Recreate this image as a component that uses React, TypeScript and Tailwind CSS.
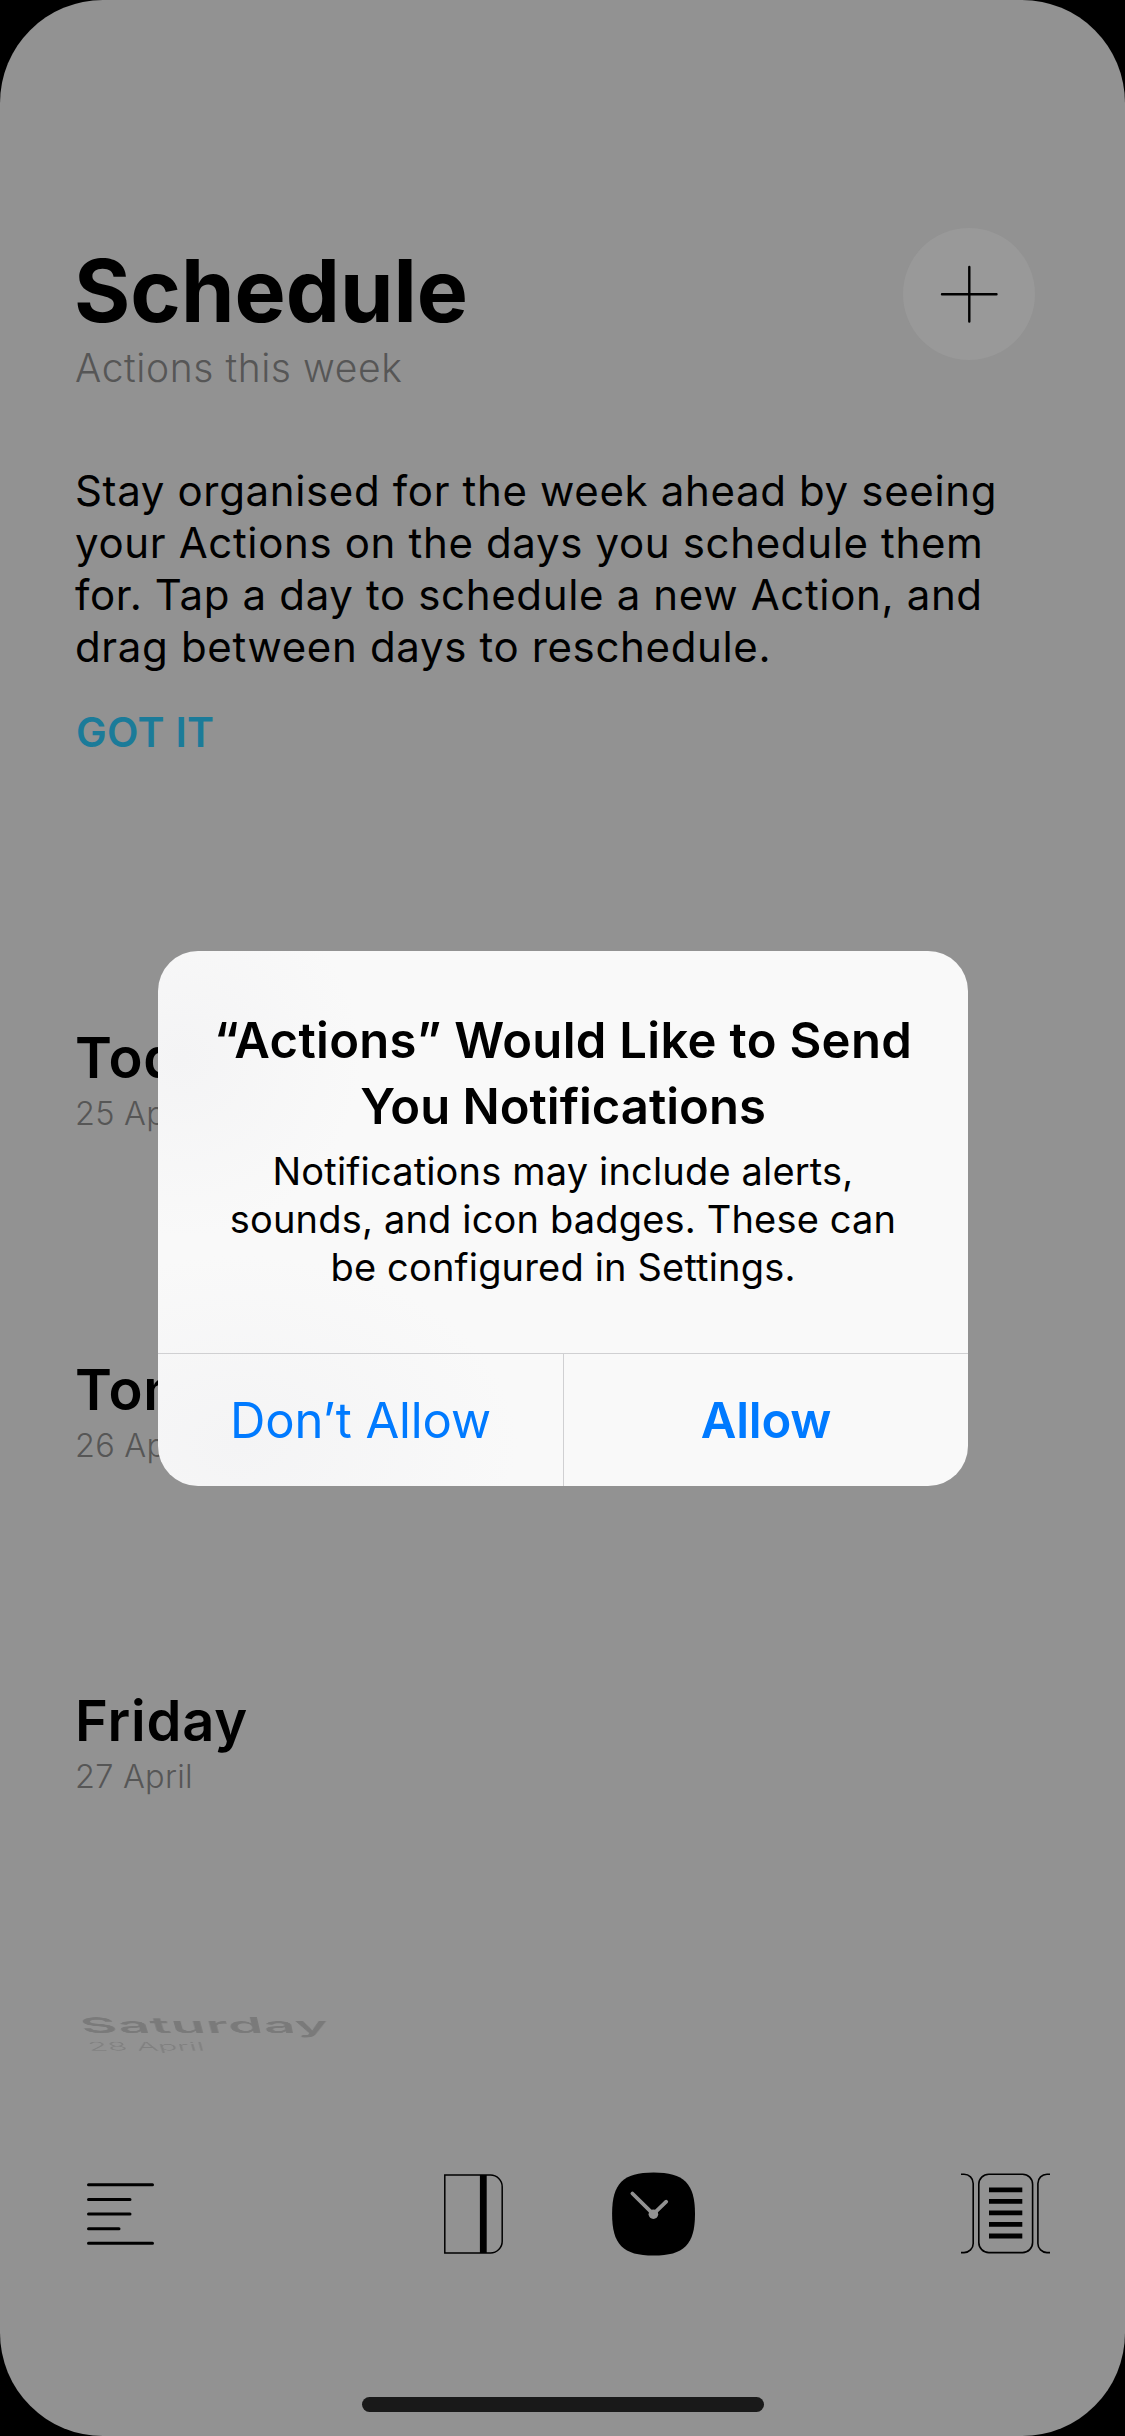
import type { ReactNode } from 'react';

function DayHeading({ day, date, muted = false }: { day: string; date: string; muted?: boolean }) {
  return (
    <div>
      <h2
        className={
          muted
            ? 'h-16 text-[56px] leading-16 font-semibold tracking-[1px] text-[#7a7a7a]'
            : 'h-16 text-[56px] leading-16 font-semibold tracking-[0.8px] text-black'
        }
      >
        {day}
      </h2>
      <p
        className={
          muted
            ? 'mt-1 h-10 text-[32.5px] leading-10 font-light tracking-[0.24px] text-[#808080]'
            : 'mt-1 h-10 text-[32.5px] leading-10 font-light tracking-[0.24px] text-[#565656]'
        }
      >
        {date}
      </p>
    </div>
  );
}

function TabButton({ label, className, children }: { label: string; className: string; children: ReactNode }) {
  return (
    <button aria-label={label} className={className}>
      {children}
    </button>
  );
}

function ListIcon() {
  return (
    <svg width="68" height="64" viewBox="0 0 68 64" fill="none" stroke="#000" strokeWidth="3" strokeLinecap="round">
      <path d="M1.5 2.7H65.5M1.5 17.4H43M1.5 32H43M1.5 46.7H32M1.5 61.3H65.5" />
    </svg>
  );
}

function NotebookIcon() {
  return (
    <svg width="59" height="80" viewBox="0 0 59 80" fill="none" stroke="#000" strokeWidth="1.5">
      <path d="M0.8 1H46.5A11.7 11.7 0 0 1 58.2 12.7V67.3A11.7 11.7 0 0 1 46.5 79H0.8Z" />
      <path d="M39.3 1V79" strokeWidth="6.8" />
    </svg>
  );
}

function ClockIcon() {
  return (
    <svg width="84" height="84" viewBox="0 0 84 84" fill="none">
      <path d="M41.6 0.6C72 0.6 83 11.5 83 42C83 72.5 72 83.6 41.6 83.6C11 83.6 0.1 72.5 0.1 42C0.1 11.5 11 0.6 41.6 0.6Z" fill="#000" />
      <path d="M20.4 21.5L41.3 42.2L54.2 29.7" stroke="#929292" strokeWidth="3.8" strokeLinecap="round" />
      <circle cx="41.4" cy="42.2" r="4.8" fill="#929292" />
    </svg>
  );
}

function CardsIcon() {
  return (
    <svg width="90" height="82" viewBox="0 0 90 82" fill="none" stroke="#000" strokeWidth="1.6">
      <path d="M0 1.2H3A9.2 9.2 0 0 1 12.2 10.4V70.4A9.2 9.2 0 0 1 3 79.6H0" />
      <rect x="17.8" y="1.2" width="53.8" height="78.4" rx="10" />
      <path d="M89 1.2H86A9.2 9.2 0 0 0 76.9 10.4V70.4A9.2 9.2 0 0 0 86 79.6H89" />
      <path d="M28 16.8H61.3M28 28.3H61.3M28 39.8H61.3M28 51.4H61.3M28 63H61.3" strokeWidth="4.8" />
    </svg>
  );
}

function PermissionAlert() {
  return (
    <div
      role="alertdialog"
      className="absolute top-[951px] left-[158px] flex h-[535px] w-[810px] flex-col overflow-hidden rounded-[40px] bg-[#f9f9f9] bg-[radial-gradient(circle_at_3%_20%,#f4f4f5,transparent_20%),radial-gradient(ellipse_at_10%_92%,#f4f4f5,transparent_27%)] text-center text-black"
    >
      <div className="flex-1 pt-[57px]">
        <h3 className="text-[49px] leading-[66px] font-semibold">
          <span className="tracking-[0.31px]">“Actions” Would Like to Send</span>
          <br />
          You Notifications
        </h3>
        <p className="mt-[7px] text-[38px] leading-12 tracking-[0.17px]">
          Notifications may include alerts,
          <br />
          sounds, and icon badges. These can
          <br />
          be configured in Settings.
        </p>
      </div>
      <div className="flex h-[133px] border-t border-[#d0d0d2] text-[49px] leading-[134px] text-[#007aff]">
        <button className="w-[405px] tracking-[-0.12px]">Don’t Allow</button>
        <button className="flex-1 border-l border-[#d0d0d2] font-semibold tracking-[-0.2px]">Allow</button>
      </div>
    </div>
  );
}

export default function App() {
  return (
    <div className="h-[2436px] w-[1125px] overflow-hidden bg-black font-['Inter',sans-serif]">
      <div className="relative flex h-full flex-col overflow-hidden rounded-[103px] bg-[#929292]">
        <header className="flex justify-between pt-[228px] pr-[90px] pl-[75px]">
          <div className="pt-[13px]">
            <h1 className="-ml-px h-[100px] text-[86px] leading-[100px] font-bold">Schedule</h1>
            <p className="mt-[3px] h-12 text-[39px] leading-12 font-light tracking-[0.58px] text-[#565656]">
              Actions this week
            </p>
          </div>
          <button aria-label="Add action" className="flex size-[132px] items-center justify-center rounded-full bg-[#999999]">
            <svg width="60" height="60" viewBox="0 0 60 60" stroke="#000" strokeWidth="2.4" strokeLinecap="round">
              <path d="M3 30.3H57.5M30.3 3V57.5" />
            </svg>
          </button>
        </header>

        <section className="mt-[73px] px-[75px]">
          <p className="h-[208px] text-[42px] leading-[52px] tracking-[0.65px] whitespace-nowrap text-black">
            Stay organised for the week ahead by seeing
            <br />
            your Actions on the days you schedule them
            <br />
            for. Tap a day to schedule a new Action, and
            <br />
            drag between days to reschedule.
          </p>
          <button className="mt-[34px] ml-px block h-[50px] text-[41px] leading-[50px] font-semibold tracking-[0.26px] text-[#1b7b99]">
            GOT IT
          </button>
        </section>

        <main className="mt-[269px] flex flex-col gap-[223.5px] px-[75px]">
          <DayHeading day="Today" date="25 April" />
          <DayHeading day="Tomorrow" date="26 April" />
          <DayHeading day="Friday" date="27 April" />
        </main>

        {/* The next day folds away beneath the tab bar */}
        <div className="mt-[216px] h-[107px] origin-top px-[76px] [transform:perspective(3200px)_rotateX(-67deg)]">
          <DayHeading day="Saturday" date="28 April" muted />
        </div>

        <nav className="mt-[52px] flex h-[84px] items-center pl-[87px]">
          <TabButton label="List" className="flex w-[357px] justify-start">
            <ListIcon />
          </TabButton>
          <TabButton label="Notebook" className="flex w-[168px] justify-start">
            <NotebookIcon />
          </TabButton>
          <TabButton label="Schedule" className="flex w-[349px] justify-start">
            <ClockIcon />
          </TabButton>
          <TabButton label="Cards" className="flex justify-start">
            <CardsIcon />
          </TabButton>
        </nav>

        <div className="mx-auto mt-auto mb-6 h-[15px] w-[402px] rounded-full bg-[#191919]" />

        <PermissionAlert />
      </div>
    </div>
  );
}
